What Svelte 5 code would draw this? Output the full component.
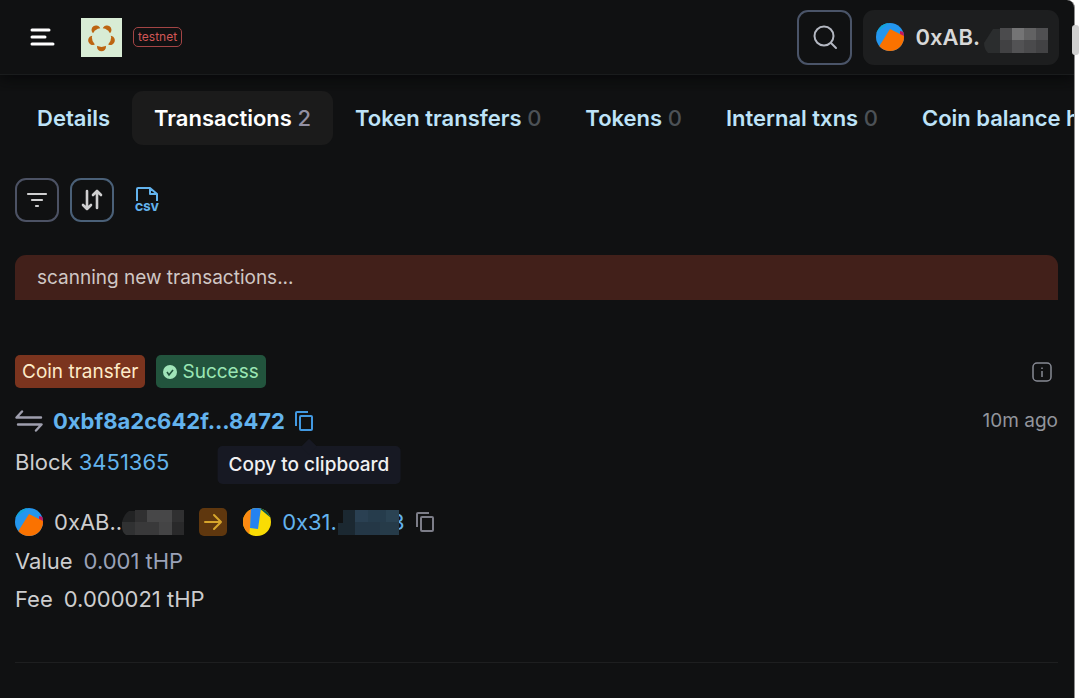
<script lang="ts">
    let activeTab = $state("Transactions");
    let tooltipOpen = $state(true);

    const hash = "0xbf8a2c642f...8472";
    const tabs: { name: string; count?: number }[] = [
        { name: "Details" },
        { name: "Transactions", count: 2 },
        { name: "Token transfers", count: 0 },
        { name: "Tokens", count: 0 },
        { name: "Internal txns", count: 0 },
        { name: "Coin balance history" },
    ];

    async function copy(text: string) {
        try {
            await navigator.clipboard.writeText(text);
        } catch (e) {
            console.error(e);
        }
        tooltipOpen = true;
    }
</script>

{#snippet avatar()}
    <svg class="avatar" viewBox="0 0 28 28" aria-hidden="true">
        <clipPath id="round"><circle cx="14" cy="14" r="14" /></clipPath>
        <g clip-path="url(#round)">
            <rect width="28" height="28" fill="#2496ee" />
            <path d="M0 0h13L0 10z" fill="#12a5d8" />
            <path d="M24 8l4 1v8l-4-4z" fill="#c8145c" />
            <path d="M14 6l14 7v15H0l4-6z" fill="#fa7200" />
        </g>
    </svg>
{/snippet}

{#snippet copyIcon()}
    <svg width="18" height="20" viewBox="0 0 18 20" fill="none" stroke="currentColor" stroke-width="2" aria-hidden="true">
        <path d="M1 15V2a1 1 0 0 1 1-1h11" />
        <rect x="5" y="5" width="12" height="14" rx="1" />
    </svg>
{/snippet}

<div class="window">
    <header>
        <button class="menu" aria-label="Menu">
            <svg width="26" height="18" viewBox="0 0 26 18" stroke="#fff" stroke-width="3" stroke-linecap="round">
                <path d="M3 2h17M3 9h13M3 16h21" />
            </svg>
        </button>
        <a class="logo" href="#home" aria-label="Home">
            <svg width="41" height="39" viewBox="0 0 41 39">
                <rect width="41" height="39" fill="#d8ecd5" />
                {#each [0, 72, 144, 216, 288] as angle}
                    <circle cx="20.5" cy="28.8" r="4.5" fill="#bd6410" transform="rotate({angle} 20.5 19.5)" />
                {/each}
                <circle cx="20.5" cy="19.5" r="9.6" fill="#d8ecd5" />
            </svg>
        </a>
        <span class="network">testnet</span>
        <button class="search" aria-label="Search">
            <svg width="26" height="26" viewBox="0 0 26 26" fill="none" stroke="currentColor" stroke-width="2" stroke-linecap="round">
                <circle cx="12" cy="12" r="9.5" />
                <path d="M19 19l5 5" />
            </svg>
        </button>
        <button class="account">
            {@render avatar()}
            <span>0xAB.</span>
            <svg class="mask" width="64" height="26" viewBox="0 0 64 26" aria-hidden="true">
                <path d="M9 2h7v24H4q-4-4-4-10z" fill="#2b2d2e" />
                <path d="M16 1h12v13H16z" fill="#4b4b4d" />
                <path d="M28 1h12v13H28z" fill="#747475" />
                <path d="M40 1h12v13H40z" fill="#626263" />
                <path d="M52 1h12v13H52z" fill="#505052" />
                <path d="M16 13h12v13H16z" fill="#414143" />
                <path d="M28 13h12v13H28z" fill="#525254" />
                <path d="M40 13h12v13H40z" fill="#4a4a4c" />
                <path d="M52 13h12v13H52z" fill="#424244" />
            </svg>
        </button>
    </header>

    <main>
        <nav class="tabs">
            {#each tabs as tab (tab.name)}
                <button
                    class="tab"
                    class:active={tab.name === activeTab}
                    onclick={() => (activeTab = tab.name)}
                >
                    {tab.name}
                    {#if tab.count !== undefined}
                        <span class="count">{tab.count}</span>
                    {/if}
                </button>
            {/each}
        </nav>

        <div class="toolbar">
            <button class="tool" aria-label="Filter">
                <svg width="22" height="22" viewBox="0 0 22 22" stroke="currentColor" stroke-width="2.2" stroke-linecap="round">
                    <path d="M2 5h18M6 11h10M10 17h2" />
                </svg>
            </button>
            <button class="tool sort" aria-label="Sort">
                <svg width="22" height="22" viewBox="0 0 22 22" fill="none" stroke="currentColor" stroke-width="2.6" stroke-linecap="round" stroke-linejoin="round">
                    <path d="M6 2v18M2 16l4 4 4-4M16 19V2M12 6l4-4 4 4" />
                </svg>
            </button>
            <a class="csv" href="#csv" aria-label="Download CSV">
                <svg width="22" height="14" viewBox="0 0 22 14" fill="none" stroke="currentColor" stroke-width="2" stroke-linejoin="round">
                    <path d="M1 14V2a1 1 0 0 1 1-1h12l7 6v7M14 1v6h7" />
                </svg>
                <span>CSV</span>
            </a>
        </div>

        <div class="scanning">scanning new transactions...</div>

        <article>
            <div class="row tags">
                <span class="tag transfer">Coin transfer</span>
                <span class="tag success">
                    <svg width="14" height="14" viewBox="0 0 14 14" aria-hidden="true">
                        <circle cx="7" cy="7" r="7" fill="#a0e5b9" />
                        <path d="M4 7l2 3 4-5" fill="none" stroke="#22543d" stroke-width="1.6" />
                    </svg>
                    Success
                </span>
                <button class="info" aria-label="Transaction info">
                    <svg width="20" height="20" viewBox="0 0 20 20" fill="none" stroke="currentColor" stroke-width="1.5">
                        <rect x="1" y="1" width="18" height="18" rx="4" />
                        <path d="M10 9v6M10 5.5v1.5" />
                    </svg>
                </button>
            </div>

            <div class="row hash">
                <svg class="swap" width="28" height="22" viewBox="0 0 28 22" fill="none" stroke="currentColor" stroke-width="2.4" stroke-linecap="round" stroke-linejoin="round" aria-hidden="true">
                    <path d="M7 1.5L1.5 7.500H26M21 20.500l5.500-6H3" />
                </svg>
                <a href="#tx">{hash}</a>
                <button
                    class="copy hovered"
                    aria-label="Copy transaction hash"
                    onclick={() => copy(hash)}
                    onmouseenter={() => (tooltipOpen = true)}
                    onmouseleave={() => (tooltipOpen = false)}
                >
                    {@render copyIcon()}
                    {#if tooltipOpen}
                        <span class="tooltip">Copy to clipboard</span>
                    {/if}
                </button>
                <span class="age">10m ago</span>
            </div>

            <div class="row block">
                <span>Block <a href="#block">3451365</a></span>
            </div>

            <div class="row parties">
                {@render avatar()}
                <span class="from">0xAB..</span>
                <svg class="mask" width="62" height="26" viewBox="0 0 62 26" aria-hidden="true">
                    <path d="M7 2h7v11H0q2-8 7-11z" fill="#222324" />
                    <path d="M0 13h14v13H4q-4-3-4-8z" fill="#303132" />
                    <path d="M13 1h13v12H13z" fill="#303031" />
                    <path d="M25 1h25v12H25z" fill="#474748" />
                    <path d="M50 1h12v12H50z" fill="#303031" />
                    <path d="M13 13h24v13H13z" fill="#39393a" />
                    <path d="M37 13h13v13H37z" fill="#444445" />
                    <path d="M50 13h12v13H50z" fill="#29292a" />
                </svg>
                <span class="arrow">
                    <svg width="20" height="20" viewBox="0 0 20 20" fill="none" stroke="currentColor" stroke-width="2" stroke-linecap="round" stroke-linejoin="round" aria-hidden="true">
                        <path d="M2 10h16M11 3l7 7-7 7" />
                    </svg>
                </span>
                <svg class="avatar" viewBox="0 0 28 28" aria-hidden="true">
                    <g clip-path="url(#round)">
                        <rect width="28" height="28" fill="#f9dc04" />
                        <path d="M0 0h9L6 28H0z" fill="#fb8a12" />
                        <path d="M16 0h12v10z" fill="#07594a" />
                        <path d="M8 0h10l-3 21-8-1z" fill="#2482f0" />
                    </g>
                </svg>
                <a class="to" href="#address">
                    0x31.
                    <svg class="mask" width="61" height="26" viewBox="0 0 61 26" aria-hidden="true">
                        <path d="M5 1h12v25H0V14h5z" fill="#1b2831" />
                        <path d="M17 1h13v12H17z" fill="#2a4052" />
                        <path d="M30 1h18v12H30z" fill="#263c4c" />
                        <path d="M48 1h13v12H48z" fill="#2b4353" />
                        <path d="M17 13h25v13H17z" fill="#243746" />
                        <path d="M42 13h19v13H42z" fill="#263b49" />
                    </svg>
                    <span class="tail">3</span>
                </a>
                <button class="copy" aria-label="Copy address" onclick={() => copy("0x31")}>
                    {@render copyIcon()}
                </button>
            </div>

            <dl>
                <dt>Value</dt>
                <dd class="value">0.001 tHP</dd>
            </dl>
            <dl>
                <dt>Fee</dt>
                <dd>0.000021 tHP</dd>
            </dl>
        </article>
    </main>
    <span class="scroll-thumb"></span>
</div>

<style>
    :global(body) {
        margin: 0;
        background: #fff;
    }
    .window {
        position: relative;
        box-sizing: border-box;
        min-height: 100vh;
        margin-right: 5px;
        border-right: 1px solid #8c8c8c;
        border-top-right-radius: 8px;
        background: #101112;
        color: #cdcdce;
        font-family: Inter, sans-serif;
        font-size: 22px;
        line-height: 32px;
    }
    button {
        padding: 0;
        border: 0;
        background: none;
        color: inherit;
        font: inherit;
        cursor: pointer;
    }
    a {
        color: #63b3ed;
        text-decoration: none;
    }
    svg {
        display: block;
        flex-shrink: 0;
    }
    header {
        display: flex;
        align-items: center;
        height: 74px;
        padding: 0 15px 0 29px;
        border-bottom: 1px solid #1a1c1d;
        box-shadow: 0 4px 12px #08090a;
        clip-path: inset(0 0 -16px 0);
    }
    .logo {
        margin: 0 11px 0 26px;
    }
    .network {
        padding: 0 4px;
        border: 1px solid #a34545;
        border-radius: 5px;
        color: #d05656;
        font-size: 12px;
        line-height: 18px;
    }
    .search {
        display: grid;
        place-items: center;
        box-sizing: border-box;
        width: 55px;
        height: 55px;
        margin-left: auto;
        border: 2px solid #4a5468;
        border-radius: 11px;
        color: #b4b8c2;
    }
    .account {
        display: flex;
        align-items: center;
        height: 55px;
        margin-left: 11px;
        padding: 0 11px 0 13px;
        border-radius: 11px;
        background: #1d1e1f;
        color: #d8d8d8;
        font-weight: 600;
    }
    .account span {
        margin-left: 11px;
    }
    .account .mask {
        margin: 6px 0 0 4px;
    }
    .avatar {
        width: 28px;
        height: 28px;
    }
    main {
        padding: 16px 16px 0 15px;
    }
    .tabs {
        display: flex;
        margin-right: -16px;
        overflow: hidden;
    }
    .tab {
        flex-shrink: 0;
        height: 54px;
        padding: 0 22px;
        border-radius: 11px;
        color: #bee3f8;
        font-weight: 600;
        white-space: nowrap;
    }
    .tab.active {
        background: #1b1b1b;
        color: #fff;
    }
    .count {
        color: #4c5156;
        font-weight: 500;
    }
    .active .count {
        color: #9390a3;
    }
    .toolbar {
        display: flex;
        align-items: center;
        gap: 11px;
        margin-top: 33px;
    }
    .tool {
        display: grid;
        place-items: center;
        box-sizing: border-box;
        width: 44px;
        height: 44px;
        border: 2px solid #4c5264;
        border-radius: 11px;
        color: #cfcfd0;
    }
    .sort {
        border-color: #4a6078;
    }
    .csv {
        display: flex;
        flex-direction: column;
        align-items: center;
        margin-left: 10px;
        font-size: 11px;
        font-weight: 800;
        line-height: 12px;
    }
    .scanning {
        margin-top: 33px;
        padding: 6px 22px;
        border-radius: 11px 11px 0 0;
        background: #42201a;
        color: #d0c7c5;
        font-size: 19px;
        line-height: 33px;
    }
    article {
        margin-top: 55px;
        padding-bottom: 44px;
        border-bottom: 1px solid #1e1f20;
    }
    .row {
        display: flex;
        align-items: center;
    }
    .tags {
        gap: 11px;
    }
    .tag {
        display: flex;
        align-items: center;
        gap: 5px;
        padding: 0 7px;
        border-radius: 5px;
        font-size: 19px;
        line-height: 33px;
    }
    .transfer {
        background: #7b341e;
        color: #feebc8;
    }
    .success {
        background: #22543d;
        color: #9ae6b4;
    }
    .info {
        margin: 0 6px 0 auto;
        color: #878a94;
    }
    .hash {
        margin-top: 17px;
    }
    .hash a {
        margin: 0 10px;
        font-weight: 700;
    }
    .swap {
        color: #9f9fae;
    }
    .copy {
        position: relative;
        color: #7c7d88;
    }
    .hovered {
        color: #4299e1;
    }
    .tooltip {
        position: absolute;
        top: 35px;
        left: 14px;
        padding: 3px 11px;
        border-radius: 5px;
        background: #171923;
        color: #f0f0f1;
        font-size: 19px;
        font-weight: 500;
        white-space: nowrap;
        transform: translateX(-50%);
    }
    .tooltip::before {
        content: "";
        position: absolute;
        top: -5px;
        left: 50%;
        width: 11px;
        height: 11px;
        margin-left: -5px;
        background: #171923;
        transform: rotate(45deg);
    }
    .age {
        margin-left: auto;
        color: #92959c;
        font-size: 19px;
    }
    .block {
        margin-top: 9px;
    }
    .parties {
        margin-top: 28px;
        margin-bottom: 4px;
    }
    .from {
        margin-left: 11px;
    }
    .arrow {
        display: grid;
        place-items: center;
        width: 28px;
        height: 28px;
        margin: 0 16px 0 15px;
        border-radius: 5px;
        background: #5f370e;
        color: #d6a52c;
    }
    .to {
        display: flex;
        align-items: center;
        margin: 0 11px;
    }
    .to .mask {
        position: relative;
        margin-left: 1px;
        z-index: 1;
    }
    .tail {
        margin-left: -8px;
    }
    dl {
        display: flex;
        gap: 11px;
        margin: 0;
        line-height: 38px;
    }
    dd {
        margin: 0;
    }
    .value {
        color: #9aa2b8;
    }
    .scroll-thumb {
        position: absolute;
        top: 25px;
        right: -5px;
        width: 7px;
        height: 30px;
        border-radius: 3px;
        background: #d0d0d0;
    }
</style>
